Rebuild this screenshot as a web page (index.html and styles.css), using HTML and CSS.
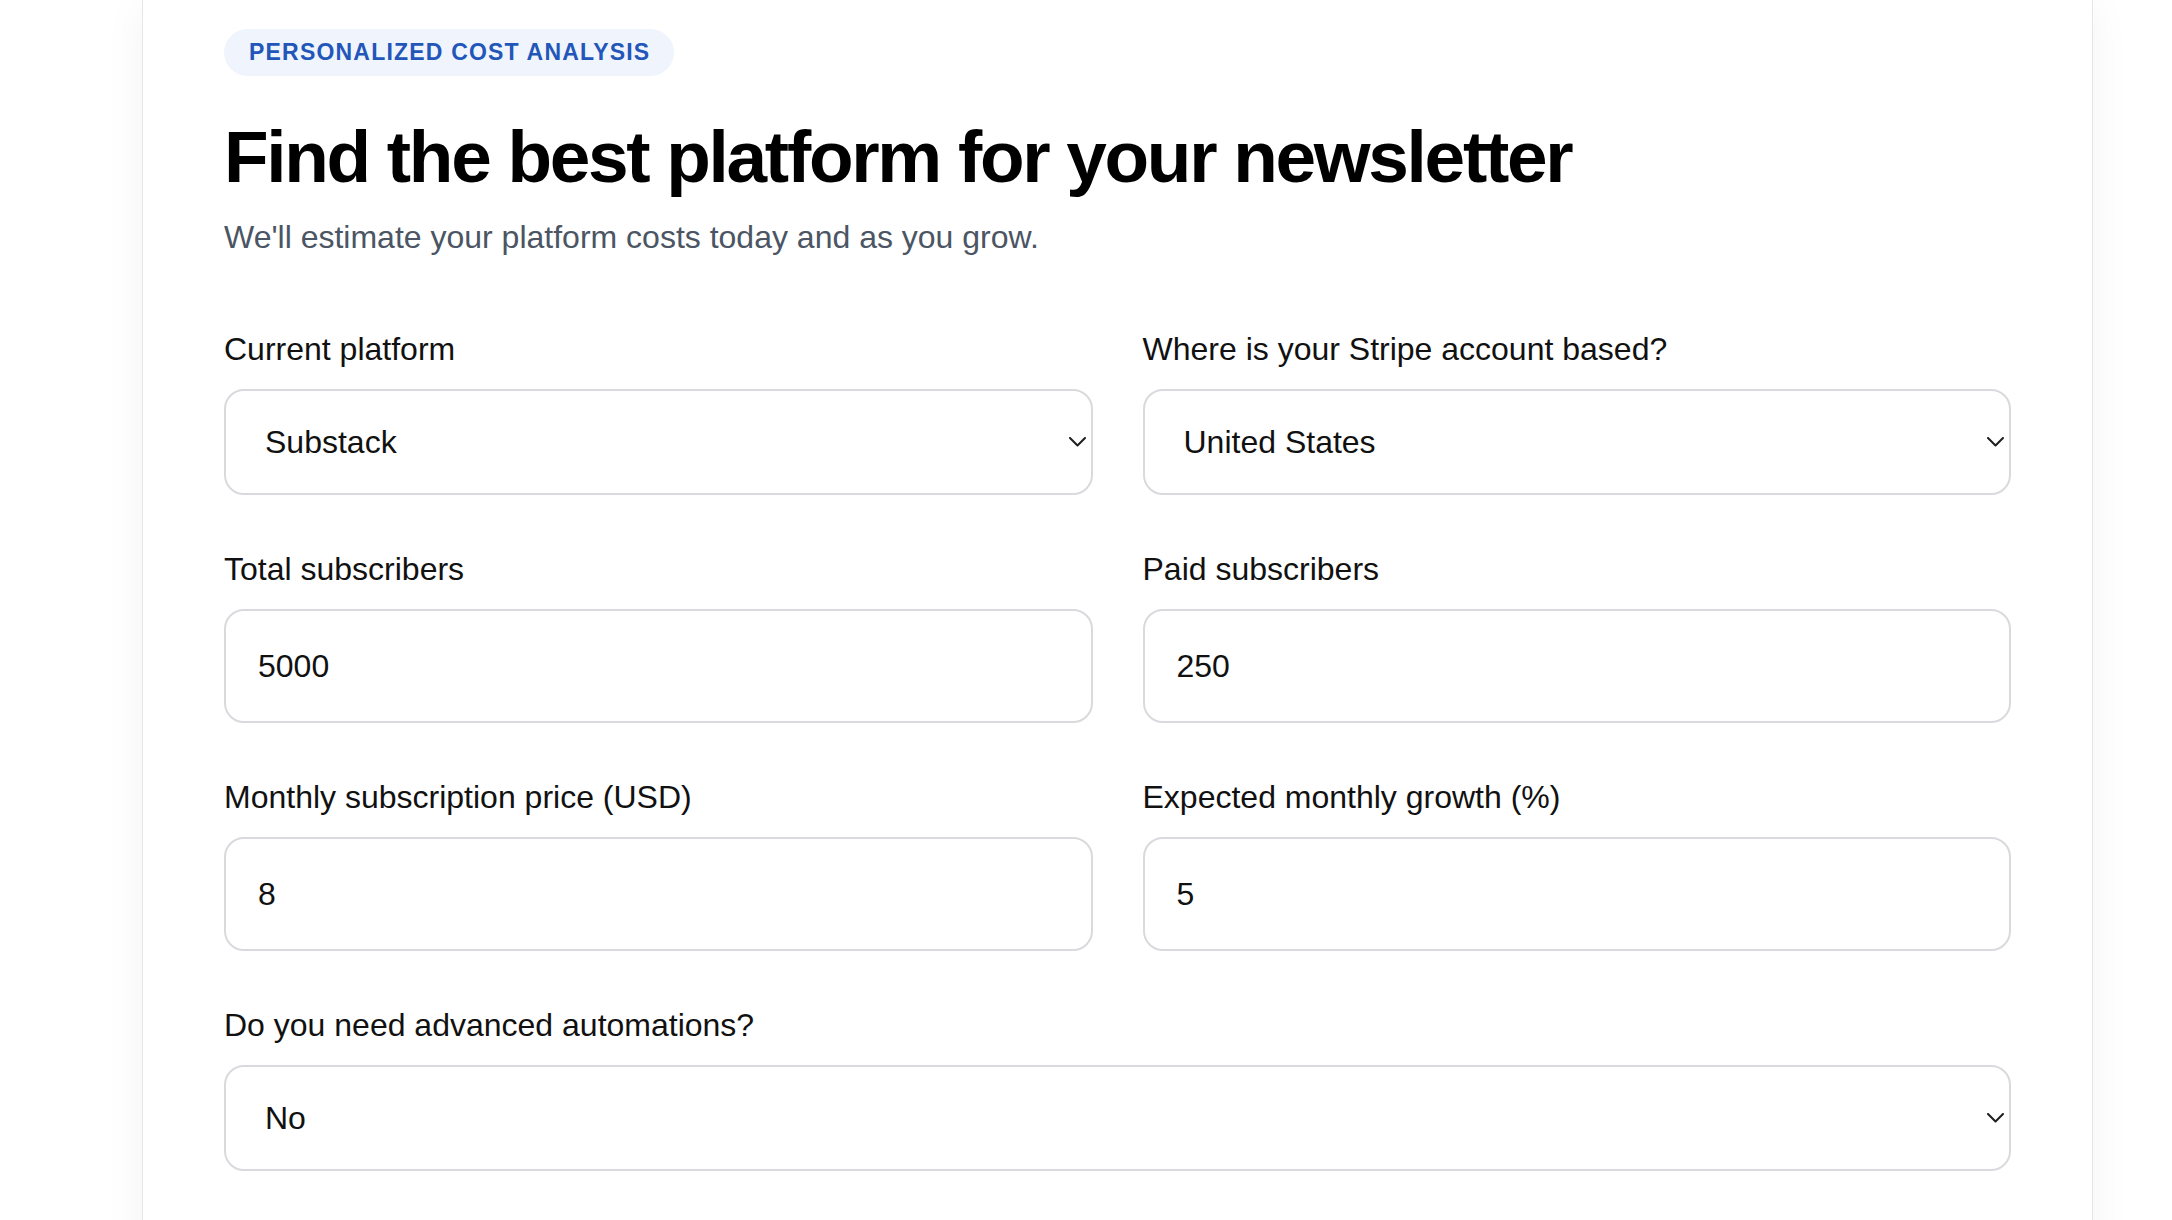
FILE: index.html
```html
<!DOCTYPE html>
<html lang="en">
<head>
<meta charset="utf-8">
<title>Find the best platform for your newsletter</title>
<link rel="stylesheet" href="styles.css">
</head>
<body>
<div class="page">
  <main class="card">
    <span class="badge">PERSONALIZED COST ANALYSIS</span>
    <h1 class="title">Find the best platform for your newsletter</h1>
    <p class="subtitle">We'll estimate your platform costs today and as you grow.</p>
    <form class="form-grid">
      <div class="field">
        <label class="field-label" for="platform">Current platform</label>
        <div class="select-wrap">
          <select id="platform" class="control control-select">
            <option selected>Substack</option>
            <option>Beehiiv</option>
            <option>Ghost</option>
            <option>Kit</option>
          </select>
          <svg class="chevron" width="17" height="10" viewBox="0 0 17 10" aria-hidden="true"><polyline points="1,1 8.5,8.5 16,1" fill="none" stroke="#1f1f1f" stroke-width="2" stroke-linecap="round" stroke-linejoin="round"/></svg>
        </div>
      </div>
      <div class="field">
        <label class="field-label" for="country">Where is your Stripe account based?</label>
        <div class="select-wrap">
          <select id="country" class="control control-select">
            <option selected>United States</option>
            <option>United Kingdom</option>
            <option>Canada</option>
          </select>
          <svg class="chevron" width="17" height="10" viewBox="0 0 17 10" aria-hidden="true"><polyline points="1,1 8.5,8.5 16,1" fill="none" stroke="#1f1f1f" stroke-width="2" stroke-linecap="round" stroke-linejoin="round"/></svg>
        </div>
      </div>
      <div class="field">
        <label class="field-label" for="total">Total subscribers</label>
        <input id="total" class="control control-input" type="text" value="5000">
      </div>
      <div class="field">
        <label class="field-label" for="paid">Paid subscribers</label>
        <input id="paid" class="control control-input" type="text" value="250">
      </div>
      <div class="field">
        <label class="field-label" for="price">Monthly subscription price (USD)</label>
        <input id="price" class="control control-input" type="text" value="8">
      </div>
      <div class="field">
        <label class="field-label" for="growth">Expected monthly growth (%)</label>
        <input id="growth" class="control control-input" type="text" value="5">
      </div>
      <div class="field field-full">
        <label class="field-label" for="auto">Do you need advanced automations?</label>
        <div class="select-wrap">
          <select id="auto" class="control control-select">
            <option selected>No</option>
            <option>Yes</option>
          </select>
          <svg class="chevron" width="17" height="10" viewBox="0 0 17 10" aria-hidden="true"><polyline points="1,1 8.5,8.5 16,1" fill="none" stroke="#1f1f1f" stroke-width="2" stroke-linecap="round" stroke-linejoin="round"/></svg>
        </div>
      </div>
    </form>
  </main>
</div>
</body>
</html>
```

FILE: styles.css
```css
* {
  box-sizing: border-box;
}

html, body {
  margin: 0;
  padding: 0;
  background: #ffffff;
  height: 100%;
  overflow: hidden;
}

body {
  font-family: "Liberation Sans", Arial, Helvetica, sans-serif;
  color: #111111;
}

.page {
  padding-left: 142px;
}

.card {
  width: 1951px;
  min-height: 1400px;
  background: #ffffff;
  border: 1px solid #e6e6e9;
  border-top: 0;
  padding: 29px 81px 120px;
  box-shadow: 0 6px 40px rgba(20, 20, 40, 0.05);
}

.badge {
  display: inline-block;
  height: 47px;
  line-height: 47px;
  padding: 0 24px 0 25px;
  border-radius: 999px;
  background: #eff4fd;
  color: #2356b9;
  font-size: 23px;
  font-weight: 700;
  letter-spacing: 1.2px;
}

.title {
  margin: 41px 0 0;
  font-size: 73px;
  line-height: 80px;
  font-weight: 700;
  letter-spacing: -2.3px;
  color: #000000;
}

.subtitle {
  margin: 16px 0 0;
  font-size: 32px;
  line-height: 48px;
  color: #4b5563;
}

.form-grid {
  margin-top: 64px;
  display: grid;
  grid-template-columns: 1fr 1fr;
  column-gap: 50px;
  row-gap: 50px;
}

.field {
  display: flex;
  flex-direction: column;
}

.field-full {
  grid-column: 1 / -1;
}

.field-label {
  font-size: 32px;
  line-height: 48px;
  margin-bottom: 16px;
  color: #111111;
}

.control {
  display: block;
  width: 100%;
  margin: 0;
  border: 2px solid #dadade;
  border-radius: 20px;
  background: #ffffff;
  font-family: "Liberation Sans", Arial, Helvetica, sans-serif;
  font-size: 32px;
  color: #111111;
  outline: none;
}

.control-input {
  height: 114px;
  padding: 0 32px;
}

.select-wrap {
  position: relative;
}

.control-select {
  height: 106px;
  padding: 0 60px 0 39px;
  -webkit-appearance: none;
  appearance: none;
}

.chevron {
  position: absolute;
  right: 7px;
  top: 48px;
  pointer-events: none;
}
```
